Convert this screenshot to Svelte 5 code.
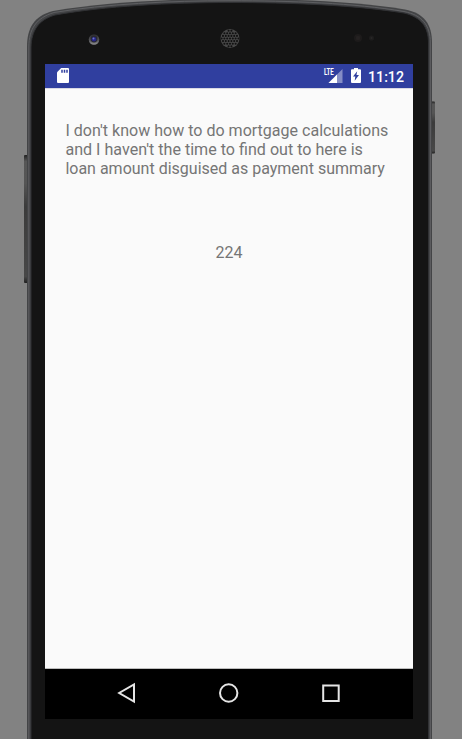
<script>
  const lines = [
    "I don't know how to do mortgage calculations",
    "and I haven't the time to find out to here is",
    'loan amount disguised as payment summary'
  ];
  const widths = [323, 297.5, 319.5];
  const amount = 224;
  const grille = [];
  for (let row = -3; row <= 3; row += 1)
    for (let col = -3; col <= 3; col += 1) {
      const x = col * 2.8 + (row % 2 ? 1.4 : 0);
      const y = row * 2.6;
      if (x * x + y * y < 76) grille.push([230 + x, 38.5 + y]);
    }
</script>

<div class="stage">
  <svg class="shell" width="462" height="739" viewBox="0 0 462 739" aria-hidden="true">
    <defs>
      <linearGradient id="key" x1="0" y1="0" x2="0" y2="1">
        <stop offset="0" stop-color="#222" />
        <stop offset=".05" stop-color="#565656" />
        <stop offset=".22" stop-color="#555" />
        <stop offset=".4" stop-color="#3b3b3b" />
        <stop offset=".95" stop-color="#484848" />
        <stop offset="1" stop-color="#202020" />
      </linearGradient>
      <linearGradient id="lens" x1="0" y1="0" x2="0" y2="1">
        <stop offset="0" stop-color="#2b2b2d" />
        <stop offset=".6" stop-color="#57575a" />
        <stop offset="1" stop-color="#929294" />
      </linearGradient>
    </defs>
    <rect x="24" y="155" width="5" height="128" rx="1" fill="url(#key)" />
    <rect x="430" y="101.500" width="5" height="52" rx="1" fill="url(#key)" />
    <path d="M27 745V47C27 28 34 16 53 11C105 2 170-1 230-1S355 1 405 9.500C424 13 432 24 432 43V745Z" fill="#434446" />
    <path d="M28.800 745V47C29 29 36 18 54 12.500C105 4 170 .7 230 .7S355 3 404 11.500C422 15 430.400 25 430.400 43V745" fill="none" stroke="#5e5f62" />
    <path d="M31 745V47C31.500 31 38 20 55 15C105 6 170 2.500 230 2.500S355 5 404 13C421 17 428.500 27 428.500 43V745Z" fill="#141414" stroke="#303134" />
    <circle cx="94" cy="39.500" r="5.300" fill="url(#lens)" />
    <circle cx="94" cy="39" r="3.400" fill="#29292f" />
    <circle cx="94" cy="39.300" r="2.300" fill="#25258a" />
    <circle cx="93.500" cy="38.600" r="1" fill="#7078c0" />
    <circle cx="230" cy="38.500" r="9.500" fill="#484848" />
    {#each grille as [x, y]}
      <circle cx={x} cy={y} r="1.050" fill="#111" />
    {/each}
    <circle cx="358" cy="38" r="4" fill="#1d1b1b" />
    <circle cx="358" cy="38" r="2.200" fill="#242121" />
    <circle cx="371.500" cy="38" r="2.600" fill="#1d1c1c" />
    <circle cx="371.500" cy="38" r="1" fill="#292727" />
  </svg>

  <div class="screen">
    <header>
      <svg class="card" width="12" height="15" viewBox="0 0 12 15" aria-hidden="true">
        <path d="M4.200 0H11Q12 0 12 1V14Q12 15 11 15H1Q0 15 0 14V4.300Z" fill="#fff" />
        <path d="M5 1.700V4.700M7.500 1.700V4.700M10 1.700V4.700" stroke="#303f9f" stroke-width="1.500" />
      </svg>
      <div class="status">
        <div class="signal">
          <svg class="bars" width="19" height="16" viewBox="0 0 19 16" aria-hidden="true">
            <path d="M18.500 1V15H4.500L8 11.500H11V8.500Z" fill="#858dc5" />
            <path d="M13 6.500V15H4.500Z" fill="#fff" />
          </svg>
          <svg class="network" width="12" height="12" viewBox="0 0 12 12">
            <text x="0" y="9.300" textLength="9.800" lengthAdjust="spacingAndGlyphs">LTE</text>
          </svg>
        </div>
        <svg class="battery" width="10" height="15" viewBox="0 0 10 15" aria-hidden="true">
          <path d="M3 0H7V1.300H9Q10 1.300 10 2.300V14Q10 15 9 15H1Q0 15 0 14V2.300Q0 1.300 1 1.300H3Z" fill="#fff" />
          <path d="M6.200 3.200L2 8.600H4.300L3.700 12.800L8 7H5.500Z" fill="#303f9f" />
        </svg>
        <svg class="clock" width="37" height="18" viewBox="0 0 37 18">
          <text x="0" y="13.500" textLength="36" lengthAdjust="spacingAndGlyphs">11:12</text>
        </svg>
      </div>
    </header>
    <main>
      <svg class="summary" width="340" height="62" viewBox="0 0 340 62">
        {#each lines as line, i}
          <text x="0.400" y={16 + i * 18.8} textLength={widths[i]} lengthAdjust="spacingAndGlyphs">{line}</text>
        {/each}
      </svg>
      <p>{amount}</p>
    </main>
    <nav>
      <svg width="20" height="22" viewBox="0 0 20 22" aria-label="Back">
        <path d="M17 2.400V19.600L2.200 11Z" />
      </svg>
      <svg width="22" height="22" viewBox="0 0 22 22" aria-label="Home">
        <circle cx="10.700" cy="11" r="8.700" />
      </svg>
      <svg width="20" height="20" viewBox="0 0 20 20" aria-label="Recent apps">
        <rect x="2.200" y="2.500" width="15.500" height="15.500" />
      </svg>
    </nav>
  </div>
</div>

<style>
  :global(body) { margin: 0; overflow: hidden; }
  .stage {
    position: relative;
    box-sizing: border-box;
    width: 462px;
    height: 739px;
    padding: 64px 49px 20px 45px;
    overflow: hidden;
    background: #828282;
    font-family: Roboto, "Liberation Sans", sans-serif;
  }
  svg { display: block; flex: none; }
  .shell { position: absolute; inset: 0; }
  .screen {
    position: relative;
    display: flex;
    flex-direction: column;
    width: 368px;
    height: 655px;
    background: #fafafa;
  }
  header {
    display: flex;
    justify-content: space-between;
    box-sizing: border-box;
    height: 24px;
    padding: 4px 8px 0 12px;
    background: #303f9f;
    box-shadow: 0 1px #d9d9e3;
  }
  .status { display: flex; }
  .signal { position: relative; margin-right: 8px; }
  .network { position: absolute; top: -2px; left: 0; overflow: visible; }
  .network text { font-size: 9.500px; font-weight: 700; fill: #fff; }
  .battery { margin-right: 7px; }
  .clock text { font-size: 14.200px; font-weight: 500; fill: #fff; }
  main {
    flex: 1;
    box-sizing: border-box;
    padding: 32px 20px 0;
    border-bottom: 1px solid #bdbdbd;
  }
  .summary text { font-size: 16.200px; fill: #757575; }
  p {
    margin: 61px 0 0 150.400px;
    font-size: 16px;
    line-height: 20px;
    color: #757575;
  }
  nav {
    display: flex;
    align-items: center;
    box-sizing: border-box;
    height: 50px;
    padding: 0 72px 2px;
    justify-content: space-between;
    background: #000;
  }
  nav svg { fill: none; stroke: #e5e5e5; stroke-width: 2; }
</style>
